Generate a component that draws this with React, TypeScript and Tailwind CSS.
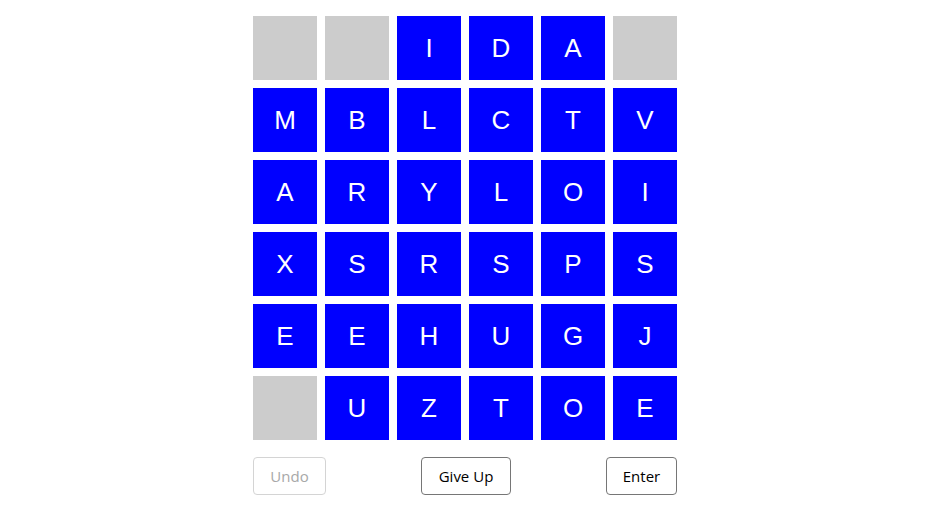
const rows = [
  ['', '', 'I', 'D', 'A', ''],
  ['M', 'B', 'L', 'C', 'T', 'V'],
  ['A', 'R', 'Y', 'L', 'O', 'I'],
  ['X', 'S', 'R', 'S', 'P', 'S'],
  ['E', 'E', 'H', 'U', 'G', 'J'],
  ['', 'U', 'Z', 'T', 'O', 'E'],
];

export default function App() {
  return (
    <div className="min-h-screen bg-white flex justify-center pt-4 pl-[2px]">
      <div className="w-[424px]">
        <div className="grid grid-cols-6 gap-2">
          {rows.flat().map((ch, i) => (
            <div
              key={i}
              className={`h-16 flex items-center justify-center text-white text-[26px] font-['Liberation_Sans',Arial,sans-serif] ${
                ch ? 'bg-[#0000ff]' : 'bg-[#cccccc]'
              }`}
            >
              {ch}
            </div>
          ))}
        </div>
        <div className="flex justify-between mt-[17px] font-['Open_Sans',sans-serif] text-[15px]">
          <button disabled className="h-[38px] w-[73px] rounded border border-[#d4d4d4] text-[#a8a8a8] bg-white">
            Undo
          </button>
          <button className="h-[38px] w-[90px] rounded border border-[#767676] text-black bg-white">
            Give Up
          </button>
          <button className="h-[38px] w-[71px] rounded border border-[#767676] text-black bg-white">
            Enter
          </button>
        </div>
      </div>
    </div>
  );
}
